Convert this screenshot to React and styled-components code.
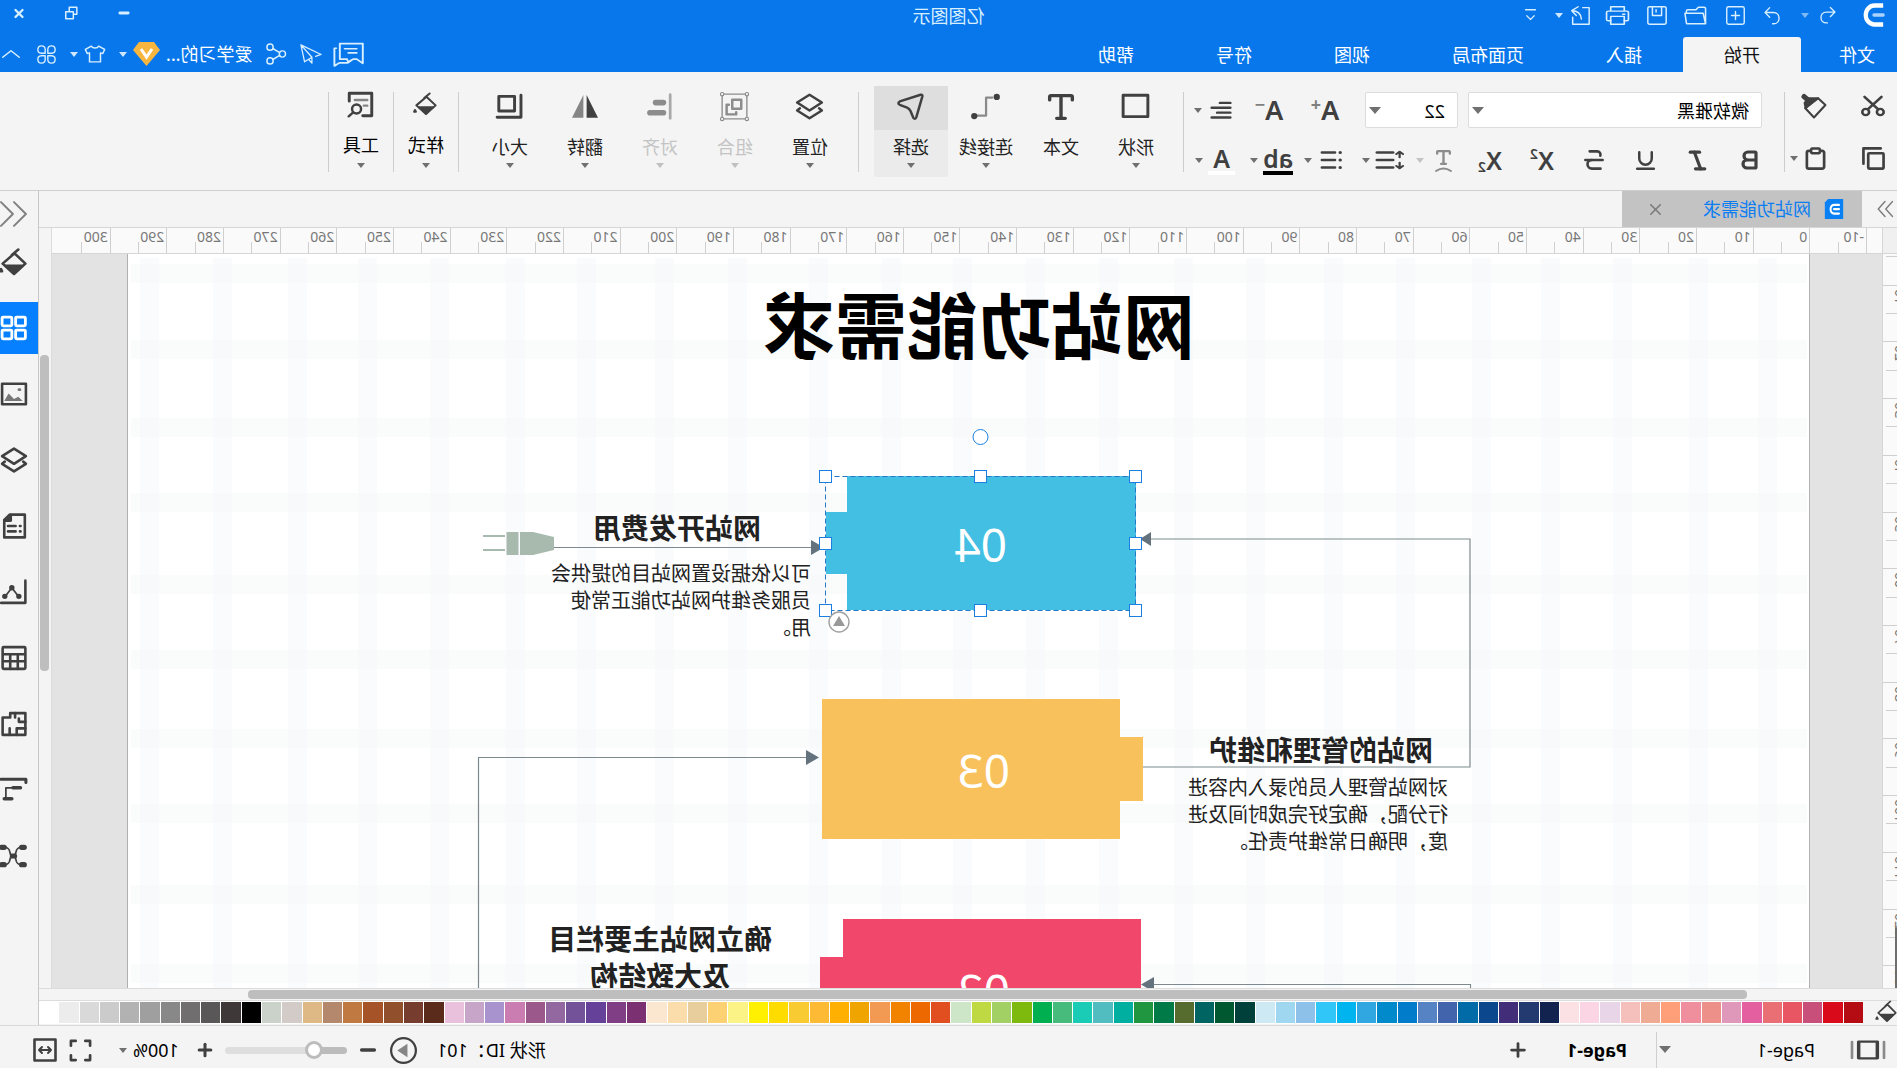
import React, { useState } from 'react';
import styled, { createGlobalStyle, css } from 'styled-components';
import { Type, Bold, Italic, Underline, Strikethrough, X, Plus, Minus } from 'lucide-react';

const GlobalStyle = createGlobalStyle`
  * { box-sizing: border-box; }
  body { margin: 0; overflow: hidden; background: #f4f4f4; }
  button, select, input { font: inherit; color: inherit; }
`;

const Window = styled.div`
  display: flex;
  flex-direction: column;
  height: 100vh;
  transform: scaleX(-1);
  background: #f4f4f4;
  color: #111;
  font-family: 'Noto Sans', 'Noto Sans CJK SC', sans-serif;
  font-size: 18px;
  line-height: 24px;
`;

const Button = styled.button`
  flex: none;
  display: flex;
  align-items: center;
  justify-content: ${p => p.$end ? 'flex-end' : 'center'};
  gap: ${p => p.$gap || 0}px;
  width: ${p => p.$w ? `${p.$w}px` : 'auto'};
  padding: 0;
  border: none;
  background: none;
  color: ${p => p.$muted ? '#8c8c8c' : 'inherit'};
  cursor: pointer;
`;

const Caret = styled.span`
  flex: none;
  width: 0;
  height: 0;
  border-left: ${p => p.$big ? 6 : 4}px solid transparent;
  border-right: ${p => p.$big ? 6 : 4}px solid transparent;
  border-top: ${p => p.$big ? 7 : 5}px solid ${p => p.$color || '#707070'};
`;

const Spacer = styled.span`
  flex: none;
  width: ${p => p.$w}px;
`;

const Svg = styled.svg`
  flex: none;
  display: block;
  fill: none;
  stroke: currentColor;
  stroke-width: ${p => p.$sw || 2};
  stroke-linecap: round;
  stroke-linejoin: round;
  overflow: visible;
`;

const shapes = {
  logo: <><path d="M2 2.500h9.500a9.500 9.500 0 0 1 0 19H2" strokeWidth="4.600" strokeLinecap="butt" stroke="#fff" /><path d="M2 12h10" stroke="#a9d2ff" strokeWidth="3.600" /></>,
  undo: <path d="M8 3L2.500 8.500 8 14M3 8.500h9.500c9 0 9 13 0 13h-1" />,
  redo: <path d="M16 3l5.500 5.500L16 14M21 8.500h-9.500c-9 0-9 13 0 13h1" />,
  newFile: <><rect x="2" y="2" width="20" height="20" rx="2" /><path d="M12 7.500v9M7.500 12h9" /></>,
  folder: <path d="M1.500 21.500V4a1.500 1.500 0 0 1 1.500-1.500h6l2.500 3H20a1.500 1.500 0 0 1 1.500 1.500v2.500M1.500 21.500L4 9.500h19l-1.500 11a1 1 0 0 1-1 1z" />,
  save: <><rect x="2" y="2" width="20" height="20" rx="2" /><path d="M7 2v10h10V2M13 5.500V8" /></>,
  print: <><path d="M5.500 7V2h13v5M5.500 18H3a1.500 1.500 0 0 1-1.500-1.500v-8A1.500 1.500 0 0 1 3 7h18a1.500 1.500 0 0 1 1.500 1.500v8A1.500 1.500 0 0 1 21 18h-2.500" /><rect x="5.500" y="13" width="13" height="9" /><path d="M5 10.500h2" /></>,
  exportIt: <path d="M9 3H2v19h18v-8M14 2l7 4.500-5 5.500M21 6.500c-6 0-10 3-10.500 9.500" />,
  collapseBar: <path d="M4 5h16M6 13l6 5 6-5" />,
  restore: <><rect x="2" y="2" width="13" height="12" /><rect x="8" y="10" width="13" height="12" fill="#0877eb" /></>,
  chat: <><path d="M1 1.500h19v15h-6l-1 3-4-3H6l-5 4z" /><path d="M6 6.500h10M6 10.500h7M23 6h1.500v17l-4-3h-7l-3-2.500" /></>,
  plane: <path d="M23 2L1 12.500l6 2M23 2l-4 18.500-8-5M23 2L11 15.500V22l3.500-4" />,
  share: <><circle cx="5" cy="12" r="3.400" /><circle cx="18.500" cy="4.500" r="3.400" /><circle cx="18.500" cy="19.500" r="3.400" /><path d="M8 10.500l7.500-4.500M8 13.500l7.500 4.500" /></>,
  shirt: <path d="M8 2.500L1.500 6.500l2 5L6 10.500V21.500h12V10.500l2.500 1 2-5L16 2.500c-1.500 3-6.500 3-8 0z" />,
  clover: <path d="M10.500 10.500H6A4.200 4.200 0 1 1 10.500 6zM13.500 10.500V6a4.200 4.200 0 1 1 4.500 4.500zM10.500 13.500V18A4.200 4.200 0 1 1 6 13.500zM13.500 13.500H18a4.200 4.200 0 1 1-4.500 4.500z" />,
  chevronUp: <path d="M3 16l9-8 9 8" />,
  scissors: <><path d="M3.500 2L17 15.500M20.500 2L7 15.500" strokeWidth="2.600" /><circle cx="4.700" cy="18.500" r="3.400" strokeWidth="2.600" /><circle cx="19.300" cy="18.500" r="3.400" strokeWidth="2.600" /></>,
  brush: <><path d="M8.500 4L1.500 10.500 12.500 22.500l8.500-9z" /><path d="M9 4l11.500 9.500 1-5-4-4.500z" fill="currentColor" /><path d="M18 6l4-3.500" strokeWidth="5" /></>,
  copy: <><rect x="1.500" y="6.500" width="16" height="16" rx="1" strokeWidth="2.800" /><path d="M4.500 1.500h18v16" strokeWidth="2.800" /></>,
  paste: <><rect x="3" y="4" width="18" height="18.500" rx="2" strokeWidth="2.800" /><rect x="7.500" y="1.500" width="9" height="5" rx="1" fill="#f4f4f4" strokeWidth="2.600" /></>,
  align: <path d="M2 2.500h11M2 9h20M2 15.500h14M2 22h20" strokeWidth="3.200" />,
  lineGap: <><path d="M9 3h14M9 12h14M9 21h14" strokeWidth="3" /><path d="M3 2v7M3 15v7M0 5l3-3 3 3M0 19l3 3 3-3" /></>,
  list: <><path d="M8 3h15M8 12h15M8 21h15" strokeWidth="3" /><path d="M2 3h.1M2 12h.1M2 21h.1" strokeWidth="3.800" /></>,
  rect: <rect x="1" y="2" width="22" height="19" strokeWidth="2.600" />,
  connector: <><path d="M4 4h5.500v16H20" stroke="#8a8a8a" strokeWidth="2" transform="translate(2 0)" /><circle cx="2" cy="3.500" r="2.800" fill="currentColor" stroke="none" /><circle cx="22" cy="20.500" r="2.800" fill="currentColor" stroke="none" /></>,
  cursor: <path d="M1.500 3.200Q1 1.200 3 1.600L21.500 7.500Q24 9 21.500 10.500L15 13Q12.800 14 12 16L9.500 22Q8 24 6.800 21.500z" />,
  layers: <><path d="M12 1.500L23 8.500 12 15.500 1 8.500z" /><path d="M3.500 13.500L1 15.500l11 7 11-7-2.500-2" /></>,
  group: <><rect x="1" y="1" width="22" height="22" strokeWidth="1.200" /><g fill="#f4f4f4" strokeWidth="1"><circle cx="1" cy="1" r="1.500" /><circle cx="23" cy="1" r="1.500" /><circle cx="1" cy="23" r="1.500" /><circle cx="23" cy="23" r="1.500" /></g><rect x="6" y="6" width="8" height="8" /><path d="M17 10.500h2V19h-8.500v-2" /></>,
  alignLeft: <><path d="M2.500 1.500v21" strokeWidth="2.400" stroke="#a8a8a8" /><path d="M8.500 8.500h7M8.500 17.500h12" strokeWidth="5" /></>,
  flip: <><path d="M0 22L10.500 1v21z" fill="currentColor" stroke="none" /><path d="M13.500 1L24 22H13.500z" fill="#858585" stroke="none" /></>,
  size: <><rect x="7.500" y="3" width="14" height="13" strokeWidth="2.600" /><path d="M1.800 2v19.500H23" strokeWidth="2.600" /></>,
  bucket: <><path d="M8 .5l6 5M11.500 4L22.500 13.500 12 23 1.500 13.500z" /><path d="M4.500 15.500h15L12 22.500z" fill="currentColor" /><path d="M24 18.500l1 2h-2z" fill="currentColor" /></>,
  tools: <><path d="M10 22H2V2h20v7" strokeWidth="2.600" /><path d="M6 8h11M6 13h3" stroke="#858585" /><circle cx="15.500" cy="16" r="4" /><path d="M18.500 19l4 3.500" /></>,
  blocks: <g strokeWidth="2.600"><rect x="1.500" y="2" width="9" height="8" rx="1" /><rect x="14" y="2" width="9" height="8" rx="1" /><rect x="1.500" y="14" width="9" height="8" rx="1" /><rect x="14" y="14" width="9" height="8" rx="1" /></g>,
  picture: <><rect x="1" y="2.500" width="22" height="19" /><path d="M4 18.500l4-4 4 2 5-5 4 7z" fill="#777" stroke="none" /><path d="M6.500 8h1" stroke="#777" /></>,
  page: <><path d="M2 1.500h14l5 5v16H2z" /><path d="M15 2v5h6" fill="currentColor" /><path d="M6 12h.5M10.500 12h7M6 17h.5M10.500 17h7" /></>,
  chart: <><path d="M1.500 1.500V22H24" /><path d="M8 16l6-8 6 8" strokeWidth="1.600" /><g fill="currentColor" strokeWidth="2"><circle cx="7.500" cy="16" r="1.500" /><circle cx="14" cy="8" r="1.500" /><circle cx="20.500" cy="16" r="1.500" /></g></>,
  table: <><rect x="1.500" y="2" width="21" height="20" rx="1" /><path d="M2 8.500h20M2 15h20M8.500 9v13M15.500 9v13" /></>,
  floor: <><path d="M1.500 2h14v4h7v16h-21z" /><path d="M1.500 10h6V7M11 2v4M1.500 16h8v6M16 22v-6" /></>,
  gantt: <><path d="M1 5V2h23" strokeWidth="2.800" /><path d="M6 10h7M14 20h7" strokeWidth="3.200" /><path d="M13 10h6.500v9" strokeWidth="1.600" /></>,
  mind: <><path d="M5 4c8 0 3 8 8 8s0 8 8 8M21 4c-8 0-3 8-8 8s0 8-8 8" strokeWidth="1.600" /><g strokeWidth="4.800"><path d="M2.500 4h2.500M2.500 20h2.500M11.500 12h2M21 4h2.500M21 20h2.500" /></g></>,
  doubleRight: <path d="M2 2l9 10-9 10M12 2l9 10-9 10" />,
  doubleLeft: <path d="M12 1L1 12l11 11M24 1L13 12l11 11" />,
  docIcon: <><path d="M1 1h18l4 4v18H1z" fill="#0a80f5" stroke="none" /><path d="M6 7.500h6a4.800 4.800 0 0 1 0 9.500H6M6 12.200h6" stroke="#fff" strokeWidth="2.400" /></>,
  pageStrip: <><rect x="5" y="2" width="14" height="20" strokeWidth="2.600" /><path d="M0 2v20M24 2v20" stroke="#8a8a8a" /></>,
  play: <><circle cx="12" cy="12" r="11" /><path d="M8.500 6l9 6-9 6z" fill="#858585" stroke="none" /></>,
  full: <path d="M2 7V2h5M17 2h5v5M22 17v5h-5M7 22H2v-5" strokeWidth="2.800" />,
  fit: <><rect x="1.500" y="1.500" width="21" height="21" strokeWidth="2.600" /><path d="M6 12h12M9 9l-3 3 3 3M15 9l3 3-3 3" /></>,
};

const Icon = ({ name, w = 24, h, sw }) => (
  <Svg width={w} height={h || w} viewBox="0 0 24 24" preserveAspectRatio="none" $sw={sw} aria-hidden="true">
    {shapes[name]}
  </Svg>
);

/* ---------- title bar ---------- */

const Header = styled.header`
  background: #0877eb;
  color: #d8efff;
`;

const TitleBar = styled.div`
  display: grid;
  grid-template-columns: 1fr auto 1fr;
  height: 37px;
  padding: 0 12px;
`;

const QuickTools = styled.div`
  display: flex;
  align-items: center;
  height: 30px;
`;

const Title = styled.h1`
  margin: 0;
  font-size: 18px;
  font-weight: 400;
  line-height: 33px;
`;

const WindowButtons = styled.div`
  display: flex;
  justify-content: flex-end;
  align-items: center;
  gap: 39px;
  height: 26px;
`;

const TabRow = styled.div`
  display: flex;
  justify-content: space-between;
  height: 35px;
`;

const Tabs = styled.nav`
  display: flex;
`;

const Tab = styled.a`
  padding: 0 41px;
  line-height: 37px;
  color: #fff;
  text-decoration: none;
  &:first-child { padding: 0 38px 0 22px; }
  ${p => p.$active && css`
    background: #f4f4f4;
    color: #111;
    border-radius: 3px 3px 0 0;
  `}
`;

const Account = styled.div`
  display: flex;
  align-items: center;
  gap: 13px;
  height: 34px;
`;

const UserName = styled.a`
  color: #fff;
  text-decoration: none;
`;

const Pair = styled.div`
  display: flex;
  align-items: center;
  gap: 6px;
`;

const tabs = ['文件', '开始', '插入', '页面布局', '视图', '符号', '帮助'];

const quick = [
  ['redo', 36, 20, '重做'], ['newFile', 38, 21, '新建'], ['folder', 42, 23, '打开'],
  ['save', 36, 22, '保存'], ['print', 42, 25, '打印'], ['exportIt', 34, 22, '导出'],
];

const TopBar = () => {
  const [tab, setTab] = useState('开始');
  return (
    <Header>
      <TitleBar>
        <QuickTools>
          <Icon name="logo" w={22} h={24} />
          <Spacer $w={18} />
          <Button $w={36} aria-label="撤销"><Icon name="undo" w={20} h={20} sw={1.6} /></Button>
          <Caret $color="#7db9f5" />
          <Spacer $w={10} />
          {quick.map(([name, width, size, label]) => (
            <Button key={name} $w={width} aria-label={label}>
              <Icon name={name} w={size} h={21} sw={1.6} />
            </Button>
          ))}
          <Caret $color="#cfe8ff" />
          <Button $w={49} aria-label="自定义"><Icon name="collapseBar" w={15} h={18} /></Button>
        </QuickTools>
        <Title>亿图图示</Title>
        <WindowButtons>
          <Button $w={14} aria-label="最小化"><Minus size={14} strokeWidth={5} /></Button>
          <Button $w={13} aria-label="还原"><Icon name="restore" w={14} sw={2.6} /></Button>
          <Button $w={14} aria-label="关闭"><X size={19} strokeWidth={4} /></Button>
        </WindowButtons>
      </TitleBar>
      <TabRow>
        <Tabs>
          {tabs.map(t => (
            <Tab key={t} href="#" $active={t === tab} onClick={() => setTab(t)}>{t}</Tab>
          ))}
        </Tabs>
        <Account>
          <Button aria-label="消息"><Icon name="chat" w={29} h={25} sw={1.6} /></Button>
          <Button aria-label="发送"><Icon name="plane" w={22} sw={1.4} /></Button>
          <Button aria-label="分享"><Icon name="share" w={22} sw={1.6} /></Button>
          <Pair>
            <UserName href="#">爱学习的...</UserName>
            <svg width="27" height="24" viewBox="0 0 27 24" aria-hidden="true">
              <path d="M6 0h15l6 8-13.500 16L0 8z" fill="#f9b63f" />
              <path d="M8 7l5.500 8L19 7" fill="none" stroke="#fff" strokeWidth="3" />
            </svg>
            <Caret $color="#cfe8ff" />
          </Pair>
          <Pair>
            <Button aria-label="皮肤"><Icon name="shirt" w={22} h={20} sw={1.6} /></Button>
            <Caret $color="#cfe8ff" />
          </Pair>
          <Button aria-label="应用"><Icon name="clover" w={21} sw={1.6} /></Button>
          <Button $w={23} aria-label="收起"><Icon name="chevronUp" w={22} h={20} sw={1.6} /></Button>
        </Account>
      </TabRow>
    </Header>
  );
};

/* ---------- ribbon ---------- */

const RibbonBar = styled.section`
  display: flex;
  height: 119px;
  padding-top: 14px;
  border-bottom: 1px solid #cfcfcf;
  color: #404040;
`;

const Divider = styled.div`
  flex: none;
  width: 1px;
  height: 80px;
  margin-top: 6px;
  background: #cdcdcd;
`;

const Clipboard = styled.div`
  display: grid;
  grid-template-columns: 58px 42px;
  grid-template-rows: 40px 64px;
  justify-items: start;
  width: 112px;
  padding-left: 12px;
`;

const Format = styled.div`
  display: flex;
  flex-direction: column;
  gap: 14px;
  padding: 6px 10px 0 8px;
`;

const FormatRow = styled.div`
  display: flex;
  height: 36px;
`;

const PickBox = styled.label`
  position: relative;
  display: flex;
  align-items: center;
  width: ${p => p.$w}px;
  margin-left: ${p => p.$ml}px;
  border: 1px solid #dcdcdc;
  border-radius: 2px;
  background: #fff;
  & > span { position: absolute; right: 3px; top: 14px; pointer-events: none; }
`;

const Picker = styled.select`
  appearance: none;
  width: 100%;
  height: 100%;
  padding: 2px 12px 0;
  border: none;
  background: none;
  color: #000;
`;

const Letter = styled.span`
  display: flex;
  flex-direction: column;
  align-items: center;
  min-width: 27px;
  font-size: 25px;
  font-weight: 600;
  line-height: 26px;
  border-bottom: 4px solid ${p => p.$bar};
`;

const Grow = styled.span`
  display: flex;
  align-items: flex-start;
  font-size: 27px;
  font-weight: 600;
  line-height: 28px;
  sup { margin-top: 3px; font-size: 18px; line-height: 10px; color: #808080; font-weight: 700; }
`;

const Script = styled.span`
  display: flex;
  align-items: ${p => p.$low ? 'flex-end' : 'flex-start'};
  font-size: 25px;
  font-weight: 600;
  line-height: 28px;
  sup, sub { font-size: 14px; line-height: 15px; }
`;

const Curve = styled.span`
  display: flex;
  flex-direction: column;
  align-items: center;
`;

const BigGroup = styled.div`
  display: flex;
  gap: 1px;
`;

const BigButton = styled.button`
  display: flex;
  flex-direction: column;
  align-items: center;
  width: ${p => p.$narrow ? 64 : 74}px;
  height: 91px;
  padding: 0;
  border: none;
  border-radius: 2px;
  background: ${p => p.$active ? '#ebebeb' : 'none'};
  color: ${p => p.disabled ? '#c4c4c4' : p.$narrow ? '#000' : '#222'};
  line-height: 24px;
`;

const BigIcon = styled.span`
  display: flex;
  align-items: center;
  justify-content: center;
  width: 100%;
  height: 44px;
  margin-bottom: ${p => p.$narrow ? 3 : 5}px;
  padding-bottom: ${p => p.$narrow ? 8 : 3}px;
  background: ${p => p.$active ? '#dedede' : 'none'};
  color: ${p => p.$muted ? '#8c8c8c' : '#404040'};
`;

const Label = styled.span`
  margin-bottom: ${p => p.$narrow ? 6 : 4}px;
  white-space: nowrap;
`;

const Big = ({ icon, label, active, disabled, narrow, caret = true, size = 27 }) => (
  <BigButton $active={active} $narrow={narrow} disabled={disabled}>
    <BigIcon $active={active} $muted={disabled} $narrow={narrow}>
      {icon === 'type' ? <Type size={34} strokeWidth={2.4} /> : <Icon name={icon} w={size} sw={2.2} />}
    </BigIcon>
    <Label $narrow={narrow}>{label}</Label>
    {caret && <Caret $color={disabled ? '#c0c0c0' : undefined} />}
  </BigButton>
);

const Ribbon = () => (
  <RibbonBar>
    <Clipboard>
      <Button aria-label="剪切"><Icon name="scissors" w={24} h={22} /></Button>
      <Button aria-label="格式刷"><Icon name="brush" w={25} /></Button>
      <Button aria-label="复制"><Icon name="copy" w={23} /></Button>
      <Button $gap={6} aria-label="粘贴"><Icon name="paste" w={23} /><Caret /></Button>
    </Clipboard>
    <Divider />
    <Format>
      <FormatRow>
        <PickBox $w={294} $ml={14}>
          <Picker aria-label="字体" defaultValue="微软雅黑"><option>微软雅黑</option><option>宋体</option></Picker>
          <Caret $big />
        </PickBox>
        <PickBox $w={93} $ml={10}>
          <Picker aria-label="字号" defaultValue="22"><option>22</option><option>24</option></Picker>
          <Caret $big />
        </PickBox>
        <Button $w={80} aria-label="增大字号"><Grow>A<sup>+</sup></Grow></Button>
        <Button $w={32} aria-label="减小字号"><Grow>A<sup>−</sup></Grow></Button>
        <Button $w={59} $end $gap={8} aria-label="对齐方式"><Icon name="align" w={22} h={18} /><Caret /></Button>
      </FormatRow>
      <FormatRow>
        <Button $w={52} aria-label="加粗"><Bold size={24} strokeWidth={3.2} /></Button>
        <Button $w={52} aria-label="斜体"><Italic size={25} strokeWidth={3} /></Button>
        <Button $w={52} aria-label="下划线"><Underline size={25} strokeWidth={2.4} /></Button>
        <Button $w={52} aria-label="删除线"><Strikethrough size={26} strokeWidth={2.4} /></Button>
        <Button $w={52} aria-label="上标"><Script>X<sup>2</sup></Script></Button>
        <Button $w={52} aria-label="下标"><Script $low>X<sub>2</sub></Script></Button>
        <Button $w={48} $end $gap={10} $muted aria-label="文字弯曲">
          <Curve>
            <Type size={19} strokeWidth={3} />
            <Svg width="17" height="5" viewBox="0 0 17 5"><path d="M1 4q7.500-5 15 0" /></Svg>
          </Curve>
          <Caret $color="#c4c4c4" />
        </Button>
        <Button $w={54} $end $gap={6} aria-label="行距"><Icon name="lineGap" w={27} h={20} /><Caret /></Button>
        <Button $w={58} $end $gap={9} aria-label="列表"><Icon name="list" w={21} h={20} /><Caret /></Button>
        <Button $w={54} $end $gap={5} aria-label="突出显示"><Letter $bar="#000">ab</Letter><Caret /></Button>
        <Button $w={55} $end $gap={5} aria-label="字体颜色"><Letter $bar="#fff">A</Letter><Caret /></Button>
      </FormatRow>
    </Format>
    <Divider />
    <Spacer $w={10} />
    <BigGroup>
      <Big icon="rect" label="形状" />
      <Big icon="type" label="文本" caret={false} />
      <Big icon="connector" label="连接线" />
      <Big icon="cursor" label="选择" active />
    </BigGroup>
    <Spacer $w={15} />
    <Divider />
    <Spacer $w={11} />
    <BigGroup>
      <Big icon="layers" label="位置" />
      <Big icon="group" label="组合" disabled />
      <Big icon="alignLeft" label="对齐" disabled />
      <Big icon="flip" label="翻转" size={26} />
      <Big icon="size" label="大小" />
    </BigGroup>
    <Spacer $w={14} />
    <Divider />
    <Big icon="bucket" label="样式" narrow size={22} />
    <Divider />
    <Big icon="tools" label="工具" narrow />
    <Divider />
  </RibbonBar>
);

/* ---------- document tabs and rulers ---------- */

const Workspace = styled.div`
  flex: 1;
  display: flex;
  min-height: 0;
  border-bottom: 1px solid #dadada;
`;

const Editor = styled.main`
  flex: 1;
  display: flex;
  flex-direction: column;
  min-width: 0;
`;

const Pane = styled(Editor).attrs({ as: 'div' })``;

const DocTabs = styled.div`
  display: flex;
  flex: none;
  height: 37px;
  padding-left: 3px;
  border-bottom: 1px solid #d6d6d6;
  color: #7a7a7a;
`;

const DocTab = styled.div`
  display: flex;
  align-items: center;
  gap: 13px;
  width: 240px;
  margin-left: 14px;
  padding: 0 24px 0 18px;
  background: #c3c3c3;
  a { flex: 1; color: #0a7df2; text-decoration: none; }
`;

const HRuler = styled.div`
  display: flex;
  flex: none;
  height: 26px;
  padding-right: 2px;
  border-bottom: 1px solid #d6d6d6;
  background: #fafafa;
`;

const Corner = styled.div`
  flex: none;
  width: 15px;
  margin-right: 15px;
  border-right: 1px solid #d6d6d6;
  background: #f0f0f0;
`;

const HTicks = styled.div`
  flex: 1;
  display: grid;
  grid-template-columns: repeat(32, 1fr);
`;

const HTick = styled.span`
  border-left: 1px solid #cfcfcf;
  padding-left: 2px;
  font-size: 14px;
  line-height: 18px;
  color: #777;
  background: linear-gradient(#cfcfcf, #cfcfcf) 50% 100% / 1px 11px no-repeat;
`;

const Middle = styled.div`
  flex: 1;
  display: flex;
  min-height: 0;
`;

const VRuler = styled.div`
  position: relative;
  flex: none;
  width: 15px;
  overflow: hidden;
  border-right: 1px solid #d6d6d6;
  background: #fafafa;
  /* edge of the docked library's scroll bar */
  &::after {
    content: '';
    position: absolute;
    left: 0;
    bottom: 0;
    width: 2px;
    height: 60px;
    background: #6e6e6e;
  }
`;

const VTicks = styled.div`
  display: grid;
  grid-template-rows: repeat(14, 1fr);
  height: 794px;
  margin-top: -26px;
`;

const VTick = styled.span`
  display: flex;
  align-items: flex-start;
  border-top: 1px solid #cfcfcf;
  background: linear-gradient(#cfcfcf, #cfcfcf) 0 50% / 11px 1px no-repeat;
  b {
    margin-left: -13px;
    padding-bottom: 3px;
    writing-mode: vertical-rl;
    transform: rotate(180deg);
    font-size: 14px;
    font-weight: 400;
    line-height: 20px;
    color: #777;
  }
`;

const Canvas = styled.div`
  flex: 1;
  display: flex;
  min-width: 0;
  overflow: hidden;
  padding-left: 72px;
  background: #e3e3e3;
`;

/* ---------- drawing sheet ---------- */

const Sheet = styled.div`
  position: relative;
  flex: none;
  width: 1683px;
  background: #fff;
  border: solid #b0b0b0;
  border-width: 0 1px;
  overflow: hidden;
  svg { position: absolute; left: -1px; top: 0; }
`;

const Node = styled.div`
  position: absolute;
  left: ${p => p.$x}px;
  top: ${p => p.$y}px;
  white-space: pre;
  color: #222;
  ${p => p.$kind === 'title' && css`font-size: 72px; font-weight: 700; line-height: 80px; color: #000;`}
  ${p => p.$kind === 'heading' && css`font-size: 28px; font-weight: 700; line-height: 37px; text-align: center;`}
  ${p => p.$kind === 'body' && css`font-size: 20px; line-height: 27px;`}
  ${p => p.$kind === 'number' && css`font-size: 46px; line-height: 60px; color: #fff;`}
`;

const columns = [140, 213, 288, 358, 430, 506, 577, 655, 728, 809, 882, 953, 1026, 1099, 1174, 1246, 1324, 1396, 1472, 1541, 1613, 1689, 1758];
const rows = [264, 340, 418, 493, 575, 650, 729, 804, 885, 964];
const handles = [[761, 476], [916, 476], [1071, 476], [761, 543], [1071, 543], [761, 610], [916, 610], [1071, 610]];

const nodes = [
  ['title', 614, 31, '网站功能需求'],
  ['number', 802, 260, '04'],
  ['number', 799, 486, '03'],
  ['number', 799, 706, '02'],
  ['heading', 1048, 256, '网站开发费用'],
  ['body', 998, 306, '可以依据设置网站目的提供会\n员服务维护网站功能正常使\n用。'],
  ['heading', 376, 478, '网站的管理和维护'],
  ['body', 361, 520, '对网站管理人员的录入内容进\n行分配，确定好完成时间及进\n度，明确日常维护责任。'],
  ['heading', 1037, 667, '确立网站主要栏目\n及大致结构'],
];

const Drawing = () => (
  <Sheet>
    <svg width="1684" height="734" viewBox="87 254 1684 734" aria-hidden="true">
      <g fill="#f5f8fb" fillOpacity=".6">
        {columns.map(x => <rect key={x} x={1897 - x - 19} y="258" width="19" height="730" />)}
      </g>
      <g fill="#f5f8f8" fillOpacity=".5">
        {rows.map(y => <rect key={y} x="90" y={y} width="1676" height="19" />)}
      </g>
      <g fill="none" stroke="#7d898e" strokeWidth="1.200">
        <path d="M754 767H427V539H747" />
        <path d="M1085 757.500H1418.500V990" />
        <path d="M1080 547.500H1343" />
        <path d="M745 984.500H426.500V990" />
      </g>
      <path fill="#43bfe3" d="M761 476h289v36h21v62h-21v36H761z" />
      <path fill="#f8c15b" d="M777 699h298v140H777v-38h-23v-64h23z" />
      <path fill="#f1476b" d="M756 919h298v38h23v40H756z" />
      <g fill="#63727d">
        <path d="M757 539l-11-7v14z" />
        <path d="M1073 547.500l13-7.500v15z" />
        <path d="M1078 757.500l13-7.500v15z" />
        <path d="M756 984.500l-13-7.500v15z" />
      </g>
      <g fill="#a8b9ae">
        <path d="M1343 537l21-5h13v23h-13l-21-5z" />
        <path d="M1378.500 532h12v23h-12z" />
        <path d="M1392 535h22v2h-22zM1392 549h22v2h-22z" />
      </g>
      <path d="M761.500 476.500h310v134h-310z" fill="none" stroke="#2577c8" strokeDasharray="5 3" />
      <g fill="#fff" stroke="#1a7fe0">
        {handles.map(([x, y]) => <rect key={`${x}-${y}`} x={x - 5.5} y={y - 5.5} width="12" height="12" />)}
        <circle cx="916.500" cy="437" r="7.500" />
      </g>
      <circle cx="1058" cy="622" r="10" fill="#fff" stroke="#a0a0a0" strokeWidth="1.400" />
      <path d="M1058 616l6 10h-12z" fill="#999" />
    </svg>
    {nodes.map(([kind, x, y, text]) => (
      <Node key={text} $kind={kind} $x={x} $y={y}>{text}</Node>
    ))}
  </Sheet>
);

/* ---------- scroll bars, side panel, swatches ---------- */

const VScroll = styled.div`
  flex: none;
  width: 13px;
  padding: 127px 1px 0 2px;
  border-left: 1px solid #dcdcdc;
  background: #f4f4f4;
  &::after { content: ''; display: block; height: 316px; border-radius: 4px; background: #bebebe; }
`;

const HScroll = styled.div`
  flex: none;
  height: 13px;
  padding: 1px 209px 1px 150px;
  border: solid #dcdcdc;
  border-width: 1px 0;
  background: #f4f4f4;
  &::after { content: ''; display: block; height: 9px; border-radius: 4px; background: #bebebe; }
`;

const Swatches = styled.div`
  flex: none;
  display: flex;
  align-items: flex-start;
  height: 24px;
  color: #404040;
`;

const SwatchList = styled.div`
  flex: 1;
  display: grid;
  grid-template-columns: repeat(90, 1fr);
  gap: 1px;
  height: 23px;
  margin-left: 14px;
  padding: 1px 0;
  background: #fff;
`;

const Swatch = styled.button`
  padding: 0;
  border: none;
  background: ${p => p.$color};
`;

const SidePanel = styled.aside`
  flex: none;
  display: flex;
  flex-direction: column;
  width: 39px;
  padding-top: 9px;
  border-left: 1px solid #c8c8c8;
  color: #404040;
  overflow: hidden;
`;

const SideButton = styled(Button)`
  justify-content: flex-start;
  padding-left: 11px;
  height: ${p => p.$first ? 28 : 52}px;
  margin-bottom: ${p => p.$first ? 8 : 14}px;
  color: ${p => p.$active ? '#fff' : p.$first ? '#808080' : 'inherit'};
  background: ${p => p.$active ? '#0680ff' : 'none'};
`;

const palette = `b50c14 d90a1a c84f79 e85563 ea6f75 e45f9f df98ba ec9089 ef8f9d ff9f7a f0ab95 f5c0bb e9d5e8 fcd5e5 fbe0e4
122350 223a70 422e78 0a478c 006ba6 4164ad 5583c3 007ccb 008acb 30a7e0 00b4f0 30c6f8 8ec1ea 9fd7f0 cce9f4
00403a 005830 006462 566c2f 007a47 1f963f 00af9f 52bdc1 1accb5 46bb7c 00b050 7eb90e a3d064 bfd942 cde6c7
e14f20 ed6900 f28300 f29a54 f0a400 ffb000 fdba35 f9cb33 fedc00 ffef00 fcf387 fbd173 e8ce9c fbdcab fbe6cf
7b3071 803f84 65419a 745299 93679f 9b598b c97db0 a893cf c6a5c9 e9c1dd 5a2a1a 763d2f 914f2b a65427 c07a41
b3886d deb986 d3cbc7 cad2ca 000000 3e3838 595758 706e6f 888889 9f9f9f b2b2b2 cbcbcb d9d9da ececec ffffff`.split(/\s+/);

const sideTools = ['bucket', 'blocks', 'picture', 'layers', 'page', 'chart', 'table', 'floor', 'gantt', 'mind'];

/* ---------- status bar ---------- */

const StatusBar = styled.footer`
  flex: none;
  display: flex;
  justify-content: space-between;
  align-items: center;
  height: 42px;
  padding: 6px 33px 0 13px;
  color: #404040;
`;

const StatusGroup = styled.div`
  display: flex;
  align-items: center;
  height: 100%;
`;

const PageSelect = styled.label`
  position: relative;
  display: flex;
  align-items: center;
  width: 194px;
  margin-left: 2px;
  height: 36px;
  border-right: 1px solid #cfcfcf;
  & > span { position: absolute; right: 2px; top: 14px; }
  select { width: 100%; padding: 0 35px; }
`;

const PageTab = styled.button`
  width: 94px;
  margin: 0 21px 0 12px;
  border: none;
  background: none;
  color: #000;
  font-weight: 700;
`;

const Info = styled.span`
  margin: 0 20px 0 0;
  color: #000;
`;

const Zoom = styled.span`
  margin: 0 6px 0 16px;
  color: #000;
`;

const Slider = styled.input`
  appearance: none;
  width: 122px;
  height: 7px;
  margin: 0 10px 0 0;
  border-radius: 4px;
  background: linear-gradient(90deg, #bcbcbc 27%, #dedede 27%);
  &::-webkit-slider-thumb {
    appearance: none;
    width: 18px;
    height: 18px;
    border: 3px solid #bcbcbc;
    border-radius: 50%;
    background: #fff;
  }
`;

const App = () => {
  const [side, setSide] = useState('blocks');
  const [zoom, setZoom] = useState(23);
  return (
    <>
      <GlobalStyle />
      <Window>
        <TopBar />
        <Ribbon />
        <Workspace>
          <Editor>
            <DocTabs>
              <Button aria-label="展开面板"><Icon name="doubleRight" w={18} h={18} sw={1.8} /></Button>
              <DocTab>
                <Icon name="docIcon" w={20} h={22} />
                <a href="#">网站功能需求</a>
                <Button aria-label="关闭文档"><X size={19} strokeWidth={2} /></Button>
              </DocTab>
            </DocTabs>
            <Middle>
              <Pane>
                <HRuler>
                  <Corner />
                  <HTicks>
                    {Array.from({ length: 32 }, (_, i) => <HTick key={i}>{i < 32 - 0 && (i - 1) * 10 <= 300 ? (i - 1) * 10 : ''}</HTick>)}
                  </HTicks>
                </HRuler>
                <Middle>
                  <VRuler>
                    <VTicks>
                      {Array.from({ length: 14 }, (_, i) => <VTick key={i}><b>{i * 10}</b></VTick>)}
                    </VTicks>
                  </VRuler>
                  <Canvas><Drawing /></Canvas>
                </Middle>
              </Pane>
              <VScroll />
            </Middle>
            <HScroll />
            <Swatches>
              <Icon name="bucket" w={20} h={21} />
              <SwatchList>
                {palette.map(c => <Swatch key={c} $color={`#${c}`} aria-label={`#${c}`} />)}
              </SwatchList>
            </Swatches>
          </Editor>
          <SidePanel>
            <SideButton $first aria-label="收起面板"><Icon name="doubleLeft" w={26} h={26} sw={1.8} /></SideButton>
            {sideTools.map(name => (
              <SideButton key={name} $active={name === side} onClick={() => setSide(name)} aria-label={name}>
                <Icon name={name} w={26} h={26} sw={2.4} />
              </SideButton>
            ))}
          </SidePanel>
        </Workspace>
        <StatusBar>
          <StatusGroup>
            <Icon name="pageStrip" w={32} h={20} />
            <PageSelect>
              <Picker aria-label="页面" defaultValue="Page-1"><option>Page-1</option></Picker>
              <Caret $big />
            </PageSelect>
            <PageTab>Page-1</PageTab>
            <Button aria-label="新建页面"><Plus size={22} strokeWidth={3} /></Button>
          </StatusGroup>
          <StatusGroup>
            <Info>形状 ID：101</Info>
            <Button aria-label="播放"><Icon name="play" w={27} /></Button>
            <Button $w={43} aria-label="缩小"><Minus size={22} strokeWidth={3.6} /></Button>
            <Slider type="range" min="0" max="100" value={zoom} onChange={e => setZoom(e.target.value)} aria-label="缩放" />
            <Button aria-label="放大"><Plus size={20} strokeWidth={3.6} /></Button>
            <Zoom>100%</Zoom>
            <Caret />
            <Button $w={50} $end aria-label="全屏"><Icon name="full" w={23} /></Button>
            <Button $w={36} $end aria-label="适应宽度"><Icon name="fit" w={24} /></Button>
          </StatusGroup>
        </StatusBar>
      </Window>
    </>
  );
};

export default App;
